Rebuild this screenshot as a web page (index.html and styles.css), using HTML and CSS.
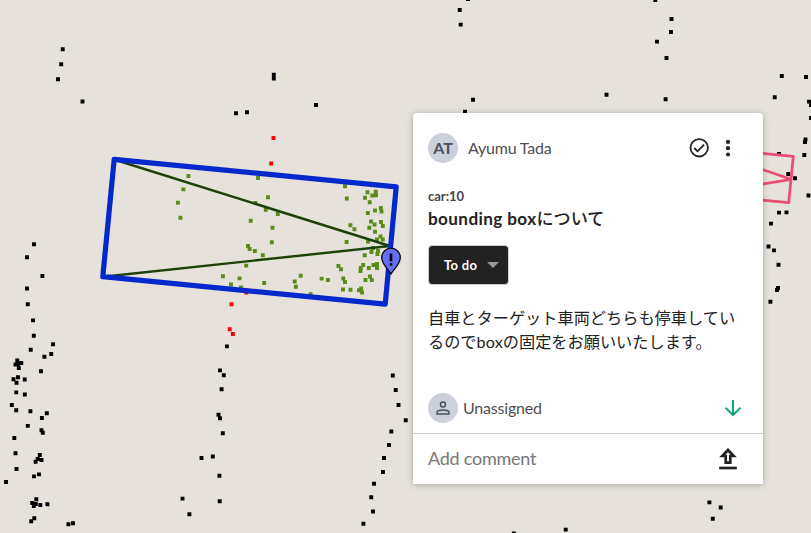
FILE: index.html
```
<!DOCTYPE html>
<html lang="ja">
<head>
<meta charset="utf-8">
<title>Annotation comment</title>
<link rel="stylesheet" href="styles.css">
</head>
<body>
<main class="viewer">
  <svg class="cloud" width="811" height="533" viewBox="0 0 811 533" aria-hidden="true">
    <path class="points" id="scan"/>
    <path class="points inside" id="inside"/>
    <path class="points near" id="near"/>
    <path class="heading" d="M114 159.5 390 246 103 276.7"/>
    <path class="box" d="M114.2 159.3 396.2 186.9 385.2 304.2 102.8 276.7Z"/>
    <path class="other" d="M755 152.7 793.3 156.3 788.7 202.7 755 199.4M755 167 791 179.3 755 185.3"/>
    <path class="pin" d="M391 273.8C387.5 268.5 381.7 264 381.7 257.5A9.3 9.3 0 0 1 400.3 257.5C400.3 264 394.5 268.5 391 273.8Z"/>
    <path class="pin-mark" d="M391 253.5V261.2M391 263.2V265.7"/>
  </svg>

  <article class="card">
    <header class="head">
      <span class="avatar">AT</span>
      <span class="author">Ayumu Tada</span>
      <svg class="check" width="22" height="22" viewBox="0 0 22 22"><circle cx="11.2" cy="10.8" r="8.7"/><path d="M6.2 11 9.5 14.3 16.1 7.6"/></svg>
      <svg class="more" width="6" height="20" viewBox="0 0 6 20"><circle cx="3" cy="3.9" r="2.1"/><circle cx="3" cy="10.2" r="2.1"/><circle cx="3" cy="16.5" r="2.1"/></svg>
    </header>
    <div class="label">car:10</div>
    <h1 class="title"><span class="latin">bounding box</span>について</h1>
    <button class="status"><span>To do</span><span class="caret"></span></button>
    <p class="text">自車とターゲット車両どちらも停車してい<br>るので<span class="latin">box</span>の固定をお願いいたします。</p>
    <div class="assignee">
      <span class="avatar"><svg width="14" height="14" viewBox="0 0 14 14"><circle cx="7" cy="3.5" r="2.5"/><path d="M1 13V11.5C1 9.8 4.4 9 7 9S13 9.8 13 11.5V13Z"/></svg></span>
      <span class="who">Unassigned</span>
      <svg class="down" width="18" height="18" viewBox="0 0 18 18"><path d="M9 1V16.2M1.6 8.8 9 16.2 16.4 8.8"/></svg>
    </div>
    <footer class="reply">
      <span class="placeholder">Add comment</span>
      <svg class="send" width="18" height="22" viewBox="0 0 18 22"><path d="M9 2 3.3 8H6.7V14.6H11.3V8H14.7Z"/><path d="M.2 20H17.8"/></svg>
    </footer>
  </article>
</main>
<script src="cloud.js"></script>
</body>
</html>
```
FILE: cloud.js
```
// Lidar returns as x,y pairs in view coordinates
const cloud = {
  scan: `62.7,49.3 61.2,64.3 58,79.3 82.5,101.5 236,113.2 247,112.3 273.8,74.8 273.8,78.5 316,105
    459.7,10 460.7,24.6 468,-1 655.3,0 671.5,19 671,32 657,41.6 666.5,58 606.5,94.7 665.6,99.3 473,99.7 465,111.7
    781.8,76 774.7,97.3 806,77 809,101.6 811,105 811,118 805.5,139.5 805,142 804.3,155 779,154 788.2,174 795,178.2
    808.5,195.5 779,212.6 786.5,212.4 771,223.6 768.5,246.5 774,250.4 778.5,264.7 778,288 777,290 770.4,301.7
    34,244.3 27,257.3 42.4,276 27,288.5 27.8,304.2 33,320.4 33.8,335.8 53,344.2 30.7,349.8 51.2,354 44.4,356.7
    17.3,360.5 21.3,363 15.5,364.5 18.8,368 18,364 41,371.3 13.5,379.2 18,377.3 24.7,379.5 16.5,382.8 16.2,392.4
    24.8,394.5 11.8,405 16.2,410.3 30.4,411.2 46.8,413.2 41.9,418 27.8,425.9 41.5,430.2 42.8,432.8 14.3,438
    15.5,453.3 39.8,455 37.7,459 41.5,460 35.6,461.7 16.5,469 39,474.4 34,476.4 6,482 36.3,499.3 32.2,503
    35.8,504 33.8,506 40.3,505 47.4,504.2 34.3,518.3 31.2,521.2 68.4,524.2 73,523.3
    226.9,346.4 220,370.4 223.8,375.2 221.6,389.2 218.5,414.8 220,418.2 222.8,433.3 212.8,456.5 201.5,458
    219.4,475.8 219.7,501.2 182.5,498.6 189.4,514.2
    392.8,375.5 395.7,390 398.5,405 405.7,420.2 391.3,431.5 389,445 384,458 383,472 374,483.7 371.2,497.2 373,511.5 363.4,523.7
    709.4,502.4 720.7,507.5 712.8,518.7 565.7,529.6 513.8,533.5`,
  inside: `188.4,176 183.4,189.4 177.9,202.8 180.4,217.8 222.9,276.2 231,284.5 239.6,278.4 241,287.5
    258,178 268,197.3 255.4,203 265.8,209.7 277.8,214 250.7,220.7 272.5,227.8 248,246 249.6,249 254.8,251 271.8,242.3
    262.8,255.2 246.2,265.6 264.2,283 300.7,275.8 294.7,281.5 295.8,286.7 321.6,278.6 328,280 310.6,294.2
    345,186.3 346.8,198.5 367.5,192.3 375.8,191.8 376,195.2 372.3,195.5 365,197.7 369.7,202.3 350.4,225.3 354.4,229.3
    367.8,213 375,210.5 380.8,208 381.5,211.5 371,221.5 374.5,224.5 381,222 382.8,226 369.3,227.8 375,231.8
    346.6,242 368,241.5 380.5,236.5 377,239.5 382.8,239.5 373,248 371.5,252 378,251 377.4,254 364.7,255.2
    338.4,266 341,269.3 363.2,265 360.8,268 360.5,271 368.8,268 373.5,265 377,264 377,268 343.3,278.5 345,282
    365.5,280 370,276.5 371.8,280 343,289.5 350.5,289.8 359,290.3 361.2,288.5 362,292.5`,
  near: `273.5,138 271.2,163.5 231.5,304.2 229.7,329.2 232.8,334 246.3,292.5`
};
for (const [id, list] of Object.entries(cloud)) {
  const d = list.trim().split(/\s+/).map(p => `M${p.replace(",", " ")}h.01`).join("");
  document.getElementById(id).setAttribute("d", d);
}
```
FILE: styles.css
```
* { box-sizing: border-box; }
body {
  margin: 0;
  font-family: Lato, "Noto Sans CJK JP", sans-serif;
  color: #222;
  overflow: hidden;
}
.viewer {
  position: relative;
  width: 811px;
  height: 533px;
  overflow: hidden;
  background: #e6e2db;
}
.cloud { display: block; fill: none; }
.points { stroke: #000; stroke-width: 3.9; stroke-linecap: square; }
.inside { stroke: #5b8c1b; }
.near { stroke: #f00; }
.heading { stroke: #1c4208; stroke-width: 2.4; }
.box { stroke: #0528cc; stroke-width: 5.2; stroke-linejoin: round; }
.other { stroke: #ec4d74; stroke-width: 2.8; stroke-linejoin: round; }
.pin { fill: #6670f5; stroke: #080808; stroke-width: 1.3; }
.pin-mark { stroke: #000; stroke-width: 2.6; }

.card {
  position: absolute;
  left: 413px;
  top: 113px;
  width: 350px;
  height: 371px;
  display: flex;
  flex-direction: column;
  background: #fff;
  border-radius: 4px 4px 0 0;
  box-shadow: 0 1px 6px rgba(0, 0, 0, .28);
}
.head {
  display: flex;
  align-items: center;
  height: 30px;
  margin: 20px 32px 0 15px;
}
.avatar {
  display: flex;
  align-items: center;
  justify-content: center;
  width: 30px;
  height: 30px;
  padding-bottom: 1px;
  border-radius: 50%;
  background: #cbd0da;
  color: #4b5160;
  font-size: 16px;
  font-weight: 700;
}
.avatar svg { margin-top: 1px; fill: none; stroke: #4b5160; stroke-width: 1.5; }
.author { margin-left: 10px; padding-bottom: 2px; font-size: 16px; letter-spacing: -.2px; color: #505050; }
.check { margin-left: auto; fill: none; stroke: #222; stroke-width: 1.8; }
.more { margin-left: 15px; fill: #222; }
.label { margin: 24px 15px 0; height: 18px; font-size: 13px; line-height: 18px; font-weight: 700; color: #484848; }
.title { margin: 1px 15px 0; height: 26px; font-size: 17.1px; line-height: 26px; font-weight: 500; white-space: nowrap; }
.title .latin { font-weight: 700; letter-spacing: .4px; }
.status {
  display: flex;
  align-items: center;
  justify-content: space-between;
  width: 81px;
  height: 40px;
  margin: 13px 0 0 15px;
  padding: 0 9px 0 15px;
  border: 1px solid #d0d0d0;
  border-radius: 4px;
  background: #222;
  color: #fff;
  font: 700 13px Lato, sans-serif;
  letter-spacing: .3px;
}
.caret { border: 6px solid transparent; border-top-color: #999; border-bottom: 0; }
.text { margin: 21px 0 0 15px; font-size: 16.2px; line-height: 24px; white-space: nowrap; }
.text .latin { letter-spacing: .1px; }
.assignee { display: flex; align-items: center; height: 30px; margin: 39px 21px 0 15px; }
.who { margin-left: 5px; padding-bottom: 2px; font-size: 16px; letter-spacing: -.2px; color: #505050; }
.down { margin-left: auto; fill: none; stroke: #12a573; stroke-width: 2; }
.reply {
  display: flex;
  align-items: center;
  justify-content: space-between;
  margin-top: auto;
  height: 51px;
  padding: 0 26px 0 15px;
  border-top: 1px solid #ccc;
}
.placeholder { padding-bottom: 2px; font-size: 18px; letter-spacing: -.25px; color: #777; }
.send { fill: none; stroke: #222; stroke-width: 2.7; }
```
